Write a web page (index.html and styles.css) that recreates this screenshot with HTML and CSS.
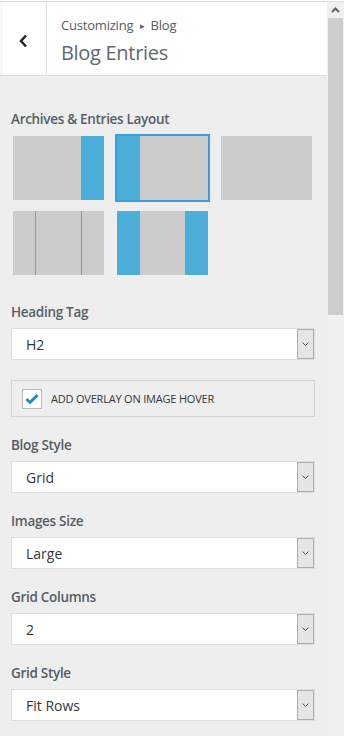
FILE: index.html
```html
<!DOCTYPE html>
<html>
  <head>
    <link rel="stylesheet" href="styles.css">
  </head>
  <body>
    <div class="topline"></div>
    <div class="app">
      <div class="panel">
        <div class="header">
          <div class="back">
            <svg width="9" height="14" viewBox="0 0 9 14">
              <path d="M7 1.5 L2 7 L7 12.5" fill="none" stroke="#23282d" stroke-width="2.6"/>
            </svg>
          </div>
          <div class="title">
            <div class="crumb">Customizing <span class="sep">&#9656;</span> Blog</div>
            <div class="heading">Blog Entries</div>
          </div>
        </div>

        <div class="controls">
          <div class="control first">
            <div class="label">Archives &amp; Entries Layout</div>
            <div class="layouts">
              <div class="layout">
                <div class="thumb"><span class="g"></span><span class="b side"></span></div>
              </div>
              <div class="layout selected">
                <div class="thumb"><span class="b side"></span><span class="g"></span></div>
              </div>
              <div class="layout">
                <div class="thumb"><span class="g"></span></div>
              </div>
              <div class="layout">
                <div class="thumb"><span class="g edge"></span><span class="b line"></span><span class="g"></span><span class="b line"></span><span class="g edge"></span></div>
              </div>
              <div class="layout">
                <div class="thumb"><span class="b side"></span><span class="g"></span><span class="b side"></span></div>
              </div>
            </div>
          </div>

          <div class="control after-layouts">
            <div class="label">Heading Tag</div>
            <div class="select">
              <span class="value">H2</span>
              <span class="arrow"><svg width="7" height="4" viewBox="0 0 7 4"><path d="M0.5 0.5 L3.5 3.5 L6.5 0.5" fill="none" stroke="#555" stroke-width="1"/></svg></span>
            </div>
          </div>

          <div class="check-row">
            <span class="checkbox">
              <svg width="14" height="12" viewBox="0 0 14 12"><path d="M1.5 6 L5 9.5 L12.5 2" fill="none" stroke="#1e8cbe" stroke-width="3"/></svg>
            </span>
            <span class="check-label">ADD OVERLAY ON IMAGE HOVER</span>
          </div>

          <div class="control">
            <div class="label">Blog Style</div>
            <div class="select">
              <span class="value">Grid</span>
              <span class="arrow"><svg width="7" height="4" viewBox="0 0 7 4"><path d="M0.5 0.5 L3.5 3.5 L6.5 0.5" fill="none" stroke="#555" stroke-width="1"/></svg></span>
            </div>
          </div>

          <div class="control">
            <div class="label">Images Size</div>
            <div class="select">
              <span class="value">Large</span>
              <span class="arrow"><svg width="7" height="4" viewBox="0 0 7 4"><path d="M0.5 0.5 L3.5 3.5 L6.5 0.5" fill="none" stroke="#555" stroke-width="1"/></svg></span>
            </div>
          </div>

          <div class="control">
            <div class="label">Grid Columns</div>
            <div class="select">
              <span class="value">2</span>
              <span class="arrow"><svg width="7" height="4" viewBox="0 0 7 4"><path d="M0.5 0.5 L3.5 3.5 L6.5 0.5" fill="none" stroke="#555" stroke-width="1"/></svg></span>
            </div>
          </div>

          <div class="control">
            <div class="label">Grid Style</div>
            <div class="select">
              <span class="value">Fit Rows</span>
              <span class="arrow"><svg width="7" height="4" viewBox="0 0 7 4"><path d="M0.5 0.5 L3.5 3.5 L6.5 0.5" fill="none" stroke="#555" stroke-width="1"/></svg></span>
            </div>
          </div>
        </div>
      </div>

      <div class="scrollbar">
        <div class="scroll-up">
          <svg width="9" height="6" viewBox="0 0 9 6"><path d="M1 5 L4.5 1.5 L8 5" fill="none" stroke="#606060" stroke-width="2"/></svg>
        </div>
        <div class="scroll-thumb"></div>
      </div>
    </div>
  </body>
</html>
```

FILE: styles.css
```css
body {
  margin: 0;
  background: #fff;
  font-family: "Open Sans", "Noto Sans", sans-serif;
  color: #555d66;
}

.topline {
  height: 1px;
  margin-top: 1px;
  background: #dddddd;
}

.app {
  display: flex;
  height: 734px;
  overflow: hidden;
}

.panel {
  width: 327px;
  background: #eeeeee;
}

.header {
  display: flex;
  height: 73px;
  background: #fff;
  border-bottom: 1px solid #dddddd;
}

.back {
  width: 43px;
  border-left: 3px solid #f4f8fb;
  border-right: 1px solid #dddddd;
  display: flex;
  align-items: center;
  justify-content: center;
}

.back svg {
  margin-left: -3px;
  margin-top: 4px;
}

.title {
  padding: 14px 0 0 14px;
}

.crumb {
  font-size: 13px;
  line-height: 18px;
  letter-spacing: -0.2px;
}

.crumb .sep {
  font-size: 9px;
  vertical-align: 1px;
  margin: 0 3px;
}

.heading {
  font-size: 20px;
  line-height: 28px;
  margin-top: 4px;
  letter-spacing: -0.3px;
  color: #60686f;
}

.controls {
  padding: 0 12px 0 11px;
}

.control {
  margin-top: 18px;
}

.control.first {
  margin-top: 33px;
}

.control.after-layouts {
  margin-top: 25px;
}

.label {
  font-size: 13.5px;
  font-weight: 600;
  line-height: 20px;
  margin-bottom: 6px;
  letter-spacing: -0.3px;
}

.control.first .label {
  margin-bottom: 5px;
}

.layouts {
  display: grid;
  grid-template-columns: repeat(3, 95px);
  column-gap: 9px;
  row-gap: 7px;
}

.layout {
  border: 2px solid transparent;
}

.layout.selected {
  border-color: #3a9be0;
}

.thumb {
  display: flex;
  height: 64px;
}

.thumb span {
  display: block;
}

.thumb .g {
  flex: 1;
  background: #cccccc;
}

.thumb .b {
  background: #4aaed9;
}

.thumb .side {
  width: 23px;
}

.thumb .edge {
  flex: 0 0 22px;
}

.thumb .line {
  width: 1px;
}

.select {
  display: flex;
  align-items: center;
  height: 30px;
  background: #fff;
  border: 1px solid #dddddd;
}

.select .value {
  padding-left: 14px;
  font-size: 14px;
  color: #32373c;
}

.select .arrow {
  margin-left: auto;
  align-self: stretch;
  width: 15px;
  background: #e5e5e5;
  border: 1px solid #adadad;
  display: flex;
  align-items: center;
  justify-content: center;
}

.check-row {
  display: flex;
  align-items: center;
  height: 35px;
  margin-top: 20px;
  border: 1px solid #d2d2d2;
  padding-left: 10px;
}

.checkbox {
  width: 18px;
  height: 18px;
  background: #fff;
  border: 1px solid #b4b9be;
  display: flex;
  align-items: center;
  justify-content: center;
}

.check-label {
  margin-left: 9px;
  font-size: 11px;
  color: #32373c;
  letter-spacing: -0.2px;
}

.scrollbar {
  width: 17px;
  background: #f0f0f0;
}

.scroll-up {
  height: 16px;
  display: flex;
  align-items: center;
  justify-content: center;
}

.scroll-thumb {
  height: 297px;
  width: 15px;
  margin-left: 1px;
  background: #cdcdcd;
}
```
